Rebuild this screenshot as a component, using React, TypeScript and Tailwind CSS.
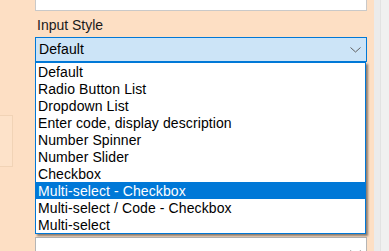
const options = [
    'Default',
    'Radio Button List',
    'Dropdown List',
    'Enter code, display description',
    'Number Spinner',
    'Number Slider',
    'Checkbox',
    'Multi-select - Checkbox',
    'Multi-select / Code - Checkbox',
    'Multi-select',
];

const selected = 'Multi-select - Checkbox';

function Chevron({ className }: { className?: string }) {
    return (
        <svg className={className} width="11" height="6" viewBox="0 0 11 6" fill="none">
            <path d="M0.5 0.5L5.5 5L10.5 0.5" stroke="currentColor" strokeWidth="1" />
        </svg>
    );
}

export default function App() {
    return (
        <div
            className="flex w-[389px] h-[251px] overflow-hidden text-[14px] text-black"
            style={{ fontFamily: '"Liberation Sans", Arial, sans-serif' }}
        >
            {/* Form area */}
            <div className="flex flex-1 bg-[#fddfc4]">
                {/* Side panel edge */}
                <div className="w-[13px] shrink-0">
                    <div className="mt-[115px] h-[52px] border-r border-y border-[#f1d3b6] bg-[#fde2c9]" />
                </div>

                <div className="flex-1 ml-[22px] mr-[7px] flex flex-col">
                    {/* Previous field, scrolled out */}
                    <div className="h-[11px] shrink-0 bg-white border-x border-b border-[#c9c9c9]" />

                    <div className="mt-[5px] h-[17px] leading-[18px] pl-[2px] text-[#1a1a1a]">Input Style</div>

                    {/* Combobox */}
                    <div className="mt-[4px] h-[25px] shrink-0 flex items-center justify-between border border-[#0078d7] bg-[#cce4f7] pl-[3px] pr-[5px]">
                        <span className="leading-[17px] tracking-[0.1px]">Default</span>
                        <Chevron className="text-[#606060]" />
                    </div>

                    {/* Open list */}
                    <div className="relative shrink-0 mr-[1px] border border-[#0078d7] bg-white shadow-[2px_2px_2px_rgba(0,0,0,0.45)]">
                        {options.map((opt) => (
                            <div
                                key={opt}
                                className={`h-[17px] leading-[18px] pl-[2px] whitespace-nowrap tracking-[0.1px] ${
                                    opt === selected ? 'bg-[#0078d7] text-white' : ''
                                }`}
                            >
                                {opt}
                            </div>
                        ))}
                    </div>

                    {/* Next combobox */}
                    <div className="mt-[3px] h-[25px] shrink-0 flex items-start justify-end border border-[#b5b5b5] bg-white pr-[5px] pt-[12px]">
                        <Chevron className="text-[#707070]" />
                    </div>
                </div>
            </div>

            {/* Scrollbar strip */}
            <div className="w-[15px] shrink-0 flex">
                <div className="w-[7px] bg-[#ebebeb] border-r border-[#e2e2e2]" />
                <div className="flex-1 bg-[#f0f0f0]" />
            </div>
        </div>
    );
}
